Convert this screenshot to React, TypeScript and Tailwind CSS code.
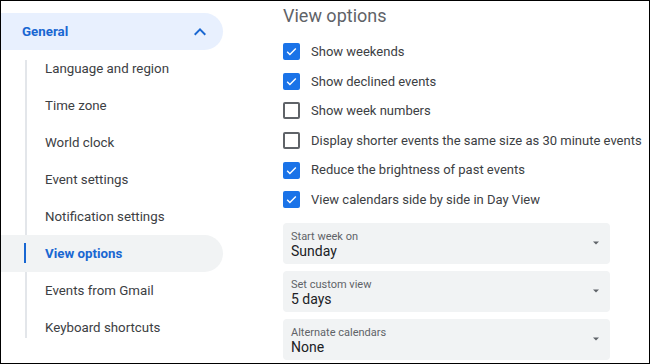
const navItems = [
  'Language and region',
  'Time zone',
  'World clock',
  'Event settings',
  'Notification settings',
  'View options',
  'Events from Gmail',
  'Keyboard shortcuts',
];

const checks = [
  { label: 'Show weekends', on: true },
  { label: 'Show declined events', on: true },
  { label: 'Show week numbers', on: false },
  { label: 'Display shorter events the same size as 30 minute events', on: false },
  { label: 'Reduce the brightness of past events', on: true },
  { label: 'View calendars side by side in Day View', on: true },
];

const selects = [
  { label: 'Start week on', value: 'Sunday' },
  { label: 'Set custom view', value: '5 days' },
  { label: 'Alternate calendars', value: 'None' },
];

function Checkbox({ on }: { on: boolean }) {
  if (on) {
    return (
      <span className="flex h-[17px] w-[17px] shrink-0 items-center justify-center rounded-[2px] bg-[#1a73e8]">
        <svg width="13" height="13" viewBox="0 0 24 24">
          <path d="M4 12.5l5 5L20 6.5" fill="none" stroke="#fff" strokeWidth="2.6" />
        </svg>
      </span>
    );
  }
  return <span className="h-[17px] w-[17px] shrink-0 rounded-[2px] border-2 border-[#5f6368]" />;
}

export default function App() {
  return (
    <div
      className="flex h-[364px] w-[650px] overflow-hidden border border-black bg-white text-[#3c4043]"
      style={{ fontFamily: 'Roboto, "Liberation Sans", sans-serif' }}
    >
      <nav className="w-[222px] shrink-0 pt-[12px]">
        <div className="flex h-[37px] items-center justify-between rounded-r-full bg-[#e8f0fe] pl-[21px] pr-[11px]">
          <span className="text-[13.3px] font-bold text-[#1967d2]">General</span>
          <svg width="24" height="24" viewBox="0 0 24 24">
            <path d="M7.4 15.4L12 10.8l4.6 4.6L18 14l-6-6-6 6z" fill="#1967d2" />
          </svg>
        </div>
        <div className="relative">
          <div className="absolute left-[24px] top-[10px] bottom-[8px] w-[2px] bg-[#e3e6ea]" />
          {navItems.map((item) => {
            const active = item === 'View options';
            return (
              <div
                key={item}
                className={
                  active
                    ? 'relative flex h-[37px] items-center rounded-r-full bg-[#f1f3f4] pl-[44px]'
                    : 'flex h-[37px] items-center pl-[44px]'
                }
              >
                {active && <div className="absolute left-[23px] top-[8px] h-[20px] w-[2px] bg-[#1967d2]" />}
                <span
                  className={
                    active ? 'text-[13.3px] font-bold text-[#1967d2]' : 'text-[13.3px] text-[#3c4043]'
                  }
                >
                  {item}
                </span>
              </div>
            );
          })}
        </div>
      </nav>

      <main className="ml-[60px] flex-1">
        <h1 className="mt-[3px] text-[18px] leading-[24px] text-[#5f6368]">View options</h1>
        <div className="mt-[9px]">
          {checks.map((c) => (
            <div key={c.label} className="flex h-[29.6px] items-center gap-[11px] whitespace-nowrap">
              <Checkbox on={c.on} />
              <span className="text-[13px]">{c.label}</span>
            </div>
          ))}
        </div>
        <div className="mt-[8px] flex w-[327px] flex-col gap-[7px]">
          {selects.map((s) => (
            <div
              key={s.label}
              className="flex h-[41px] items-center justify-between rounded-[4px] bg-[#f1f3f4] pl-[8px] pr-[9px]"
            >
              <div className="flex flex-col pt-[3px]">
                <span className="text-[11px] leading-[13px] text-[#5f6368]">{s.label}</span>
                <span className="text-[14px] leading-[17px] text-[#202124]">{s.value}</span>
              </div>
              <svg width="10" height="5" viewBox="0 0 10 5">
                <path d="M2 0.5h6L5 3.5z" fill="#5f6368" />
              </svg>
            </div>
          ))}
        </div>
      </main>
    </div>
  );
}
